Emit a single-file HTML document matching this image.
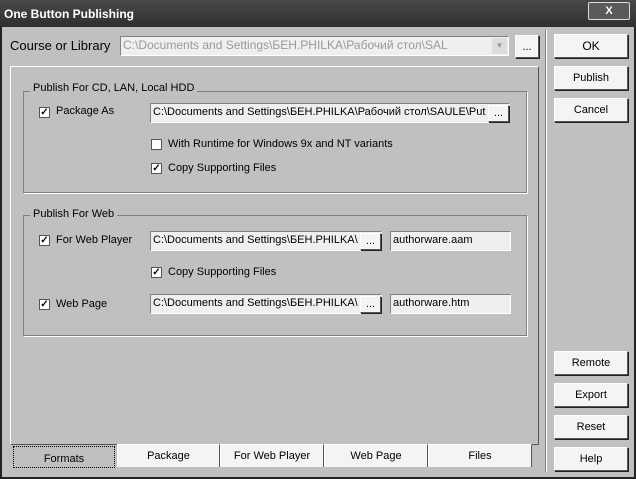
<!DOCTYPE html><html><head><meta charset="utf-8"><style>
body{margin:0;width:636px;height:479px;overflow:hidden;background:#c0c0c0;font-family:"Liberation Sans",sans-serif;font-size:11px;color:#000;position:relative}
.a{position:absolute}
.title{left:0;top:0;width:636px;height:27px;background:linear-gradient(#4a4a4a,#2e2e2e);color:#fff;font-weight:bold;font-size:12px;line-height:28px;padding-left:4px;box-sizing:border-box}
.x{left:588px;top:2px;width:40px;height:16px;background:#5a5a5a;border:1px solid #ddd;border-radius:2px;color:#fff;text-align:center;font-weight:bold;line-height:16px}
.btn{background:#f4f4f4;border:1px solid #fff;border-right-color:#555;border-bottom-color:#555;box-shadow:1px 1px 0 #222;text-align:center;box-sizing:border-box}
.field{background:#efefef;border:1px solid #808080;border-right-color:#fff;border-bottom-color:#fff;box-sizing:border-box;padding-left:2px;line-height:17px;white-space:nowrap;overflow:hidden}
.grp{border:1px solid #808080;box-shadow:1px 1px 0 #fff;box-sizing:border-box}
.lg{background:#c0c0c0;padding:0 3px}
.cb{width:11px;height:11px;background:#fff;border:1px solid #555;box-sizing:border-box;font-size:10px;line-height:9px;text-align:center;font-weight:bold}
.tab{background:#f4f4f4;border:1px solid #fff;border-right-color:#555;border-bottom:none;text-align:center;line-height:22px;box-sizing:border-box}
.dot{left:256px;top:33px;width:10px;height:14px}
</style></head><body>
<div class="a" style="left:0;top:0;width:636px;height:479px;border:2px solid #222;box-sizing:border-box"></div>
<div class="a title">One Button Publishing</div>
<div class="a x">X</div>
<div class="a" style="left:10px;top:38px;font-size:13px">Course or Library</div>
<div class="a field" style="left:120px;top:36px;width:389px;height:20px;color:#999;font-size:12px">C:\Documents and Settings\БЕН.PHILKA\Рабочий стол\SAL</div>
<div class="a" style="left:492px;top:38px;width:15px;height:16px;background:#ddd;color:#999;text-align:center;font-size:8px;line-height:16px">▼</div>
<div class="a btn" style="left:515px;top:35px;width:24px;height:23px;line-height:22px">...</div>
<div class="a" style="left:545px;top:30px;width:1px;height:442px;background:#808080;box-shadow:1px 0 0 #fff"></div>
<div class="a btn" style="left:554px;top:34px;width:74px;height:24px;line-height:22px;font-size:12px">OK</div>
<div class="a btn" style="left:554px;top:66px;width:74px;height:24px;line-height:22px">Publish</div>
<div class="a btn" style="left:554px;top:98px;width:74px;height:24px;line-height:22px">Cancel</div>
<div class="a btn" style="left:554px;top:351px;width:74px;height:24px;line-height:22px">Remote</div>
<div class="a btn" style="left:554px;top:383px;width:74px;height:24px;line-height:22px">Export</div>
<div class="a btn" style="left:554px;top:415px;width:74px;height:24px;line-height:22px">Reset</div>
<div class="a btn" style="left:554px;top:447px;width:74px;height:24px;line-height:22px">Help</div>
<div class="a" style="left:10px;top:66px;width:529px;height:379px;border:1px solid #fff;border-right-color:#555;border-bottom-color:#555;box-sizing:border-box"></div>
<div class="a grp" style="left:23px;top:91px;width:504px;height:102px"></div>
<div class="a lg" style="left:30px;top:82px">Publish For CD, LAN, Local HDD</div>
<div class="a cb" style="left:39px;top:107px">✓</div>
<div class="a" style="left:56px;top:105px">Package As</div>
<div class="a field" style="left:150px;top:103px;width:360px;height:20px">C:\Documents and Settings\БЕН.PHILKA\Рабочий стол\SAULE\Put</div>
<div class="a btn" style="left:488px;top:105px;width:21px;height:17px;line-height:14px">...</div>
<div class="a cb" style="left:151px;top:139px"></div>
<div class="a" style="left:168px;top:138px">With Runtime for Windows 9x and NT variants</div>
<div class="a cb" style="left:151px;top:163px">✓</div>
<div class="a" style="left:168px;top:162px">Copy Supporting Files</div>
<div class="a grp" style="left:23px;top:215px;width:504px;height:121px"></div>
<div class="a lg" style="left:30px;top:208px">Publish For Web</div>
<div class="a cb" style="left:39px;top:235px">✓</div>
<div class="a" style="left:56px;top:234px">For Web Player</div>
<div class="a field" style="left:150px;top:231px;width:232px;height:20px">C:\Documents and Settings\БЕН.PHILKA\</div>
<div class="a btn" style="left:360px;top:233px;width:21px;height:17px;line-height:14px">...</div>
<div class="a field" style="left:390px;top:231px;width:121px;height:20px">authorware.aam</div>
<div class="a cb" style="left:151px;top:267px">✓</div>
<div class="a" style="left:168px;top:266px">Copy Supporting Files</div>
<div class="a cb" style="left:39px;top:299px">✓</div>
<div class="a" style="left:56px;top:298px">Web Page</div>
<div class="a field" style="left:150px;top:294px;width:232px;height:20px">C:\Documents and Settings\БЕН.PHILKA\</div>
<div class="a btn" style="left:360px;top:296px;width:21px;height:17px;line-height:14px">...</div>
<div class="a field" style="left:390px;top:294px;width:121px;height:20px">authorware.htm</div>
<div class="a" style="left:13px;top:446px;width:102px;height:22px;border:1px dotted #000;box-sizing:border-box;text-align:center;line-height:24px">Formats</div>
<div class="a tab" style="left:117px;top:444px;width:103px;height:23px">Package</div>
<div class="a tab" style="left:220px;top:444px;width:104px;height:23px">For Web Player</div>
<div class="a tab" style="left:324px;top:444px;width:104px;height:23px">Web Page</div>
<div class="a tab" style="left:428px;top:444px;width:104px;height:23px">Files</div>
</body></html>
